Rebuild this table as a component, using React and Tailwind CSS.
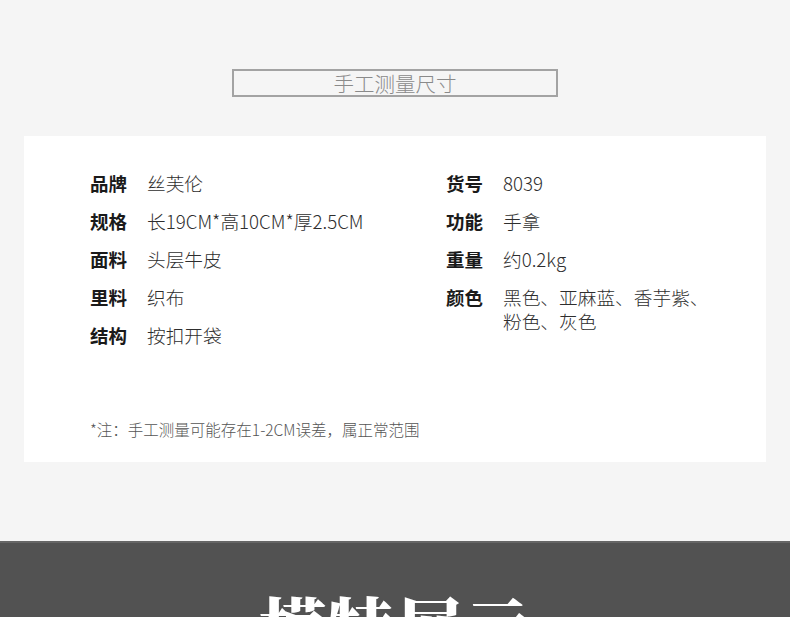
export default function App() {
  const left = [
    ["品牌", "丝芙伦"],
    ["规格", "长19CM*高10CM*厚2.5CM"],
    ["面料", "头层牛皮"],
    ["里料", "织布"],
    ["结构", "按扣开袋"],
  ];
  const right = [
    ["货号", "8039"],
    ["功能", "手拿"],
    ["重量", "约0.2kg"],
    ["颜色", "黑色、亚麻蓝、香芋紫、粉色、灰色"],
  ];
  const font = { fontFamily: '"Noto Sans CJK SC", "Noto Sans", sans-serif' };
  const Row = ({ k, v, wide }) => (
    <div className="flex items-start leading-[24px]">
      <div className="w-[57px] shrink-0 text-[18.5px] font-bold text-[#1a1a1a]">{k}</div>
      <div className={(wide ? "whitespace-nowrap " : "w-[212px] ") + "text-[18.7px] font-light text-[#2e2e2e]"}>{v}</div>
    </div>
  );
  return (
    <div className="w-[790px] h-[617px] overflow-hidden bg-[#f5f5f5]" style={font}>
      <div className="pt-[69px] flex justify-center">
        <div className="w-[326px] h-[28px] border-2 border-[#a3a3a3] flex items-center justify-center text-[20.5px] font-light text-[#8a8a8a] leading-none">
          手工测量尺寸
        </div>
      </div>
      <div className="mx-[24px] mt-[39px] h-[326px] bg-white pt-[35px] pl-[66px]">
        <div className="flex">
          <div className="w-[356px] flex flex-col gap-[14px]">
            {left.map(([k, v]) => (
              <Row key={k} k={k} v={v} wide />
            ))}
          </div>
          <div className="flex flex-col gap-[14px]">
            {right.map(([k, v]) => (
              <Row key={k} k={k} v={v} />
            ))}
          </div>
        </div>
        <div className="mt-[72px] text-[15.5px] leading-[20px] font-light text-[#555555]">
          *注：手工测量可能存在1-2CM误差，属正常范围
        </div>
      </div>
      <div className="mt-[79px] h-[200px] bg-[#525252] border-t-2 border-[#666666] flex justify-center">
        <div className="mt-[43px] text-[68px] leading-[80px] font-black text-white" style={{ fontFamily: '"Noto Serif CJK SC", "Noto Sans CJK SC", serif' }}>
          模特展示
        </div>
      </div>
    </div>
  );
}
